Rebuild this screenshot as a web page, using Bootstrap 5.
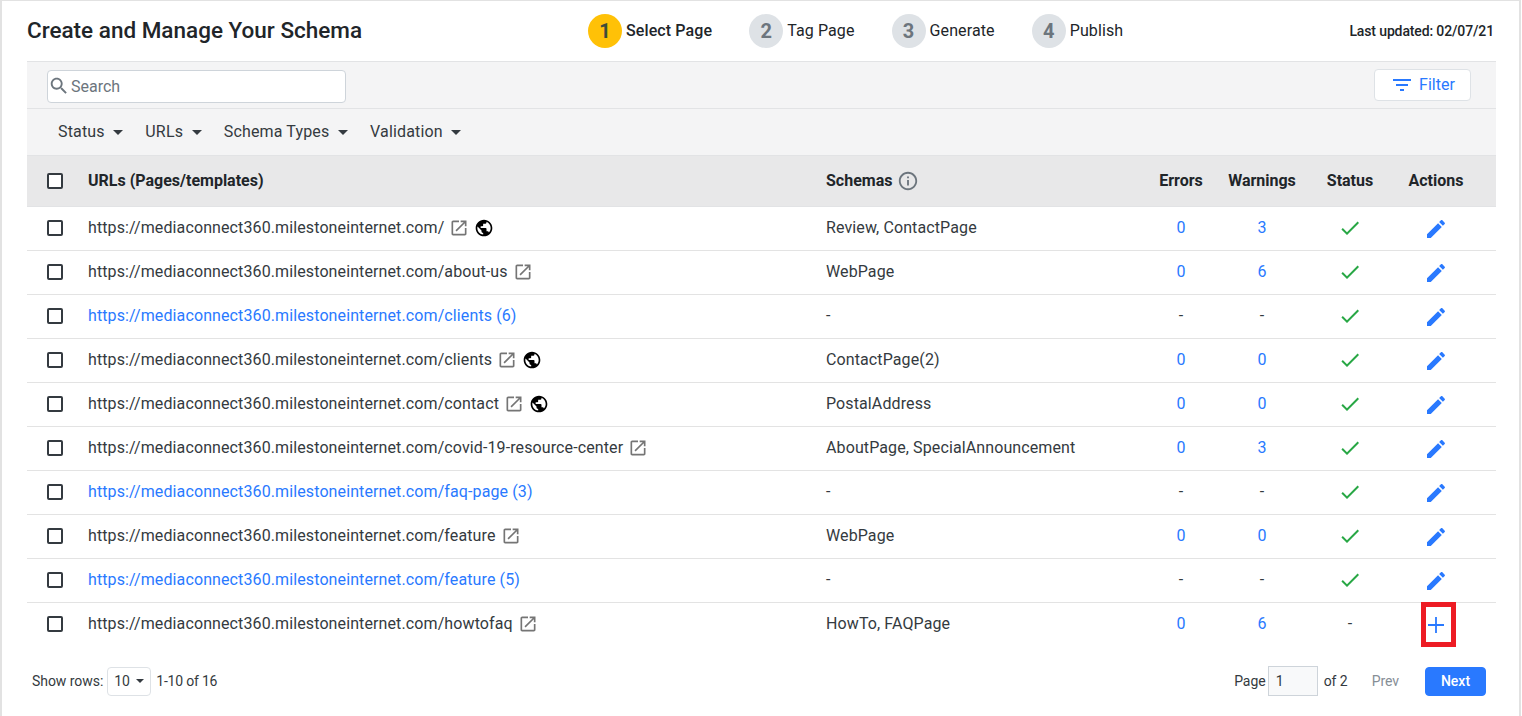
<!DOCTYPE html>
<html lang="en">
<head>
    <meta charset="UTF-8">
    <meta name="viewport" content="width=device-width, initial-scale=1.0">
    <title>Create and Manage Your Schema</title>
    <link href="https://cdn.jsdelivr.net/npm/bootstrap@5.3.0/dist/css/bootstrap.min.css" rel="stylesheet">
    <script src="https://cdn.jsdelivr.net/npm/bootstrap@5.3.0/dist/js/bootstrap.bundle.min.js"></script>
    <style>
        html, body { height: 716px; overflow: hidden; }
        body { font-family: Roboto, "Liberation Sans", sans-serif; font-size: 16px; letter-spacing: .11px; color: #212529; background: #fff; }
        .schema-shell { height: 716px; margin-right: 1px; padding: 0 23px 0 25px; border: solid #e2e2e2; border-width: 1px 2px 0 2px; }
        .page-top { height: 60px; }
        .page-title { flex: 0 0 561px; margin: 0 0 2px; font-size: 22.5px; font-weight: 500; line-height: 1.2; letter-spacing: 0; white-space: nowrap; }
        .steps { gap: 37px; }
        .step-dot { width: 34px; height: 34px; margin-right: 4px; border-radius: 50%; background: #dee2e6; color: #6c757d; font-size: 20px; font-weight: 700; }
        .step-on .step-dot { background: #ffc107; color: #3d4b3a; }
        .step-on { font-weight: 500; }
        .last-updated { flex: 1 1 0; padding-right: 2px; font-size: 14px; font-weight: 500; letter-spacing: -.13px; text-align: right; white-space: nowrap; }
        .tool-band { height: 47px; padding: 0 25px 0 20px; border-top: 1px solid #e2e3e5; background: #f4f4f5; }
        .search-box { width: 299px; height: 33px; margin-top: 2px; border: 1px solid #ced4da; border-radius: 4px; background: #fff; color: #6c757d; gap: 1px; }
        .search-box svg { flex: none; width: 22px; height: 22px; fill: #6c757d; }
        .search-box input { width: 240px; padding: 2px 0 0; border: 0; outline: 0; background: none; letter-spacing: 0; }
        .search-box input::placeholder { color: #6c757d; opacity: 1; }
        .filter-btn { width: 97px; height: 32px; padding: 0; border: 1px solid #dee2e6; background: #fff; color: #2979ff; border-radius: 4px; gap: 5px; letter-spacing: 0; }
        .filter-btn svg { width: 24px; height: 24px; fill: #2979ff; }
        .pick-row { padding-left: 31px; gap: 22px; }
        .pick-row .btn-pick { color: #343a40; padding: 0; border: 0; background: none; font-size: 16px; letter-spacing: .15px; }
        .caret-mark { display: inline-block; width: 0; height: 0; margin-left: 8.7px; vertical-align: 2px; border: 5px solid transparent; border-top-color: #343a40; border-bottom: 0; }
        .schema-table { table-layout: fixed; width: 1469px; margin: 0; color: #343a40; }
        .schema-table th, .schema-table td { height: 44px; padding: 0 12px 2px; vertical-align: middle; border-color: #e3e3e3; white-space: nowrap; font-weight: 400; color: #343a40; }
        .schema-table thead th { height: 51px; padding-bottom: 1px; background: #e8e8e9; font-weight: 700; color: #212529; letter-spacing: 0; border-top: 1px solid #e2e3e5; border-bottom: 1px solid #e2e3e5; }
        .schema-table tbody tr:last-child td { border-bottom: 0; }
        .col-check { width: 49px; }
        .col-url { width: 738px; }
        .col-errors { width: 68px; }
        .col-warn { width: 94px; }
        .col-status { width: 82px; }
        .col-actions { width: 105px; }
        .schema-table th.mid, .schema-table td.mid { text-align: center; padding-left: 0; padding-right: 0; }
        .schema-table td.act, .schema-table th.act { padding-left: 0; padding-right: 15px; text-align: center; }
        .schema-table tbody td.act { padding-bottom: 0; }
        .schema-table tbody td.add-cell { position: relative; padding-bottom: 2px; }
        .box-check { display: block; width: 16px; height: 16px; margin: 0 0 0 8px; border: 2px solid #343a40; border-radius: 2px; background: #fff; appearance: none; }
        .blue-link, .schema-table td.blue-link { color: #2979ff; text-decoration: none; }
        .ico { vertical-align: -5px; }
        .ico-open { fill: #757575; width: 20px; height: 20px; margin-left: 1px; }
        .ico-globe { fill: #000; margin-left: 5px; width: 20px; height: 20px; }
        .ico-info { fill: #6c757d; width: 22px; height: 22px; vertical-align: -6px; margin-left: 1px; }
        .ico-check { width: 24px; height: 24px; fill: #28a745; vertical-align: middle; }
        .ico-edit { width: 24px; height: 24px; fill: #2979ff; vertical-align: middle; }
        .ico-plus { width: 16px; height: 16px; stroke: #2979ff; stroke-width: 1.8; fill: none; vertical-align: middle; }
        .callout { position: absolute; left: 30px; top: -1px; width: 35px; height: 45px; border: 5px solid #ed1c24; }
        .pager-row { height: 69px; padding: 0 10px 0 5px; font-size: 14px; letter-spacing: -.05px; color: #343a40; }
        .rows-pick { width: 44px; height: 29px; margin: 0 5px 0 4px; padding-left: 6px; border: 1px solid #dee2e6; border-radius: 4px; font-size: 14px; }
        .rows-pick .caret-mark { margin-left: 6px; border-width: 4px; border-bottom: 0; }
        .row-count { letter-spacing: -.2px; }
        .page-input { width: 50px; height: 30px; margin: 0 6px 0 2px; padding: 0 7px; border: 1px solid #ced4da; background: #f8f9fa; color: #343a40; font-size: 14px; border-radius: 0; }
        .prev-link { margin: 0 26px 0 24px; color: #868e96; }
        .next-btn { width: 61px; height: 29px; padding: 0; background: #2979ff; border-color: #2979ff; font-size: 14px; font-weight: 500; border-radius: 4px; }
    </style>
</head>
<body>

    <svg width="0" height="0" class="position-absolute">
        <symbol id="i-open" viewBox="0 0 24 24"><path d="M19 19H5V5h7V3H5c-1.11 0-2 .9-2 2v14c0 1.1.89 2 2 2h14c1.1 0 2-.9 2-2v-7h-2v7zM14 3v2h3.59l-9.83 9.83 1.41 1.41L19 6.41V10h2V3h-7z"/></symbol>
        <symbol id="i-globe" viewBox="0 0 24 24"><path d="M12 2C6.48 2 2 6.48 2 12s4.48 10 10 10 10-4.48 10-10S17.52 2 12 2zm-1 17.93c-3.95-.49-7-3.85-7-7.93 0-.62.08-1.21.21-1.79L9 15v1c0 1.1.9 2 2 2v1.93zm6.9-2.54c-.26-.81-1-1.39-1.9-1.39h-1v-3c0-.55-.45-1-1-1H8v-2h2c.55 0 1-.45 1-1V7h2c1.1 0 2-.9 2-2v-.41c2.93 1.19 5 4.06 5 7.41 0 2.08-.8 3.97-2.1 5.39z"/></symbol>
        <symbol id="i-check" viewBox="0 0 24 24"><path d="M9 16.17L4.83 12l-1.42 1.41L9 19 21 7l-1.41-1.41z"/></symbol>
        <symbol id="i-edit" viewBox="0 0 24 24"><path d="M3 17.25V21h3.75L17.81 9.94l-3.75-3.75L3 17.25zM20.71 7.04c.39-.39.39-1.02 0-1.41l-2.34-2.34c-.39-.39-1.02-.39-1.41 0l-1.83 1.83 3.75 3.75 1.83-1.83z"/></symbol>
    </svg>

    <div class="schema-shell">
        <div class="page-top d-flex align-items-center">
            <h1 class="page-title">Create and Manage Your Schema</h1>
            <div class="steps d-flex align-items-center">
                <div class="step-on d-flex align-items-center"><span class="step-dot d-flex align-items-center justify-content-center">1</span>Select Page</div>
                <div class="d-flex align-items-center"><span class="step-dot d-flex align-items-center justify-content-center">2</span>Tag Page</div>
                <div class="d-flex align-items-center"><span class="step-dot d-flex align-items-center justify-content-center">3</span>Generate</div>
                <div class="d-flex align-items-center"><span class="step-dot d-flex align-items-center justify-content-center">4</span>Publish</div>
            </div>
            <div class="last-updated">Last updated: 02/07/21</div>
        </div>

        <div class="tool-band d-flex align-items-center justify-content-between">
            <label class="search-box d-flex align-items-center mb-0">
                <svg viewBox="0 0 24 24"><path d="M15.5 14h-.79l-.28-.27C15.41 12.59 16 11.11 16 9.5 16 5.91 13.09 3 9.5 3S3 5.91 3 9.5 5.91 16 9.5 16c1.61 0 3.09-.59 4.23-1.57l.27.28v.79l5 4.99L20.49 19l-4.99-5zm-6 0C7.01 14 5 11.99 5 9.5S7.01 5 9.5 5 14 7.01 14 9.5 11.99 14 9.5 14z"/></svg>
                <input type="text" placeholder="Search">
            </label>
            <button type="button" class="btn filter-btn d-flex align-items-center justify-content-center">
                <svg viewBox="0 0 24 24"><path d="M10 18h4v-2h-4v2zM3 6v2h18V6H3zm3 7h12v-2H6v2z"/></svg>Filter
            </button>
        </div>

        <div class="tool-band pick-row d-flex align-items-center justify-content-start">
            <button type="button" class="btn btn-pick">Status<span class="caret-mark"></span></button>
            <button type="button" class="btn btn-pick">URLs<span class="caret-mark"></span></button>
            <button type="button" class="btn btn-pick">Schema Types<span class="caret-mark"></span></button>
            <button type="button" class="btn btn-pick">Validation<span class="caret-mark"></span></button>
        </div>

        <table class="table schema-table">
            <colgroup>
                <col class="col-check"><col class="col-url"><col><col class="col-errors"><col class="col-warn"><col class="col-status"><col class="col-actions">
            </colgroup>
            <thead>
                <tr>
                    <th><input type="checkbox" class="box-check"></th>
                    <th>URLs (Pages/templates)</th>
                    <th>Schemas <svg class="ico-info" viewBox="0 0 24 24"><path d="M11 7h2v2h-2zm0 4h2v6h-2zm1-9C6.48 2 2 6.48 2 12s4.48 10 10 10 10-4.48 10-10S17.52 2 12 2zm0 18c-4.41 0-8-3.59-8-8s3.59-8 8-8 8 3.59 8 8-3.59 8-8 8z"/></svg></th>
                    <th class="mid">Errors</th>
                    <th class="mid">Warnings</th>
                    <th class="mid">Status</th>
                    <th class="act">Actions</th>
                </tr>
            </thead>
            <tbody>
                <tr>
                    <td><input type="checkbox" class="box-check"></td>
                    <td>https://mediaconnect360.milestoneinternet.com/ <svg class="ico ico-open"><use href="#i-open"/></svg><svg class="ico ico-globe"><use href="#i-globe"/></svg></td>
                    <td>Review, ContactPage</td>
                    <td class="mid blue-link">0</td><td class="mid blue-link">3</td>
                    <td class="mid"><svg class="ico-check"><use href="#i-check"/></svg></td>
                    <td class="act"><svg class="ico-edit"><use href="#i-edit"/></svg></td>
                </tr>
                <tr>
                    <td><input type="checkbox" class="box-check"></td>
                    <td>https://mediaconnect360.milestoneinternet.com/about-us <svg class="ico ico-open"><use href="#i-open"/></svg></td>
                    <td>WebPage</td>
                    <td class="mid blue-link">0</td><td class="mid blue-link">6</td>
                    <td class="mid"><svg class="ico-check"><use href="#i-check"/></svg></td>
                    <td class="act"><svg class="ico-edit"><use href="#i-edit"/></svg></td>
                </tr>
                <tr>
                    <td><input type="checkbox" class="box-check"></td>
                    <td><a href="#" class="blue-link">https://mediaconnect360.milestoneinternet.com/clients (6)</a></td>
                    <td>-</td>
                    <td class="mid">-</td><td class="mid">-</td>
                    <td class="mid"><svg class="ico-check"><use href="#i-check"/></svg></td>
                    <td class="act"><svg class="ico-edit"><use href="#i-edit"/></svg></td>
                </tr>
                <tr>
                    <td><input type="checkbox" class="box-check"></td>
                    <td>https://mediaconnect360.milestoneinternet.com/clients <svg class="ico ico-open"><use href="#i-open"/></svg><svg class="ico ico-globe"><use href="#i-globe"/></svg></td>
                    <td>ContactPage(2)</td>
                    <td class="mid blue-link">0</td><td class="mid blue-link">0</td>
                    <td class="mid"><svg class="ico-check"><use href="#i-check"/></svg></td>
                    <td class="act"><svg class="ico-edit"><use href="#i-edit"/></svg></td>
                </tr>
                <tr>
                    <td><input type="checkbox" class="box-check"></td>
                    <td>https://mediaconnect360.milestoneinternet.com/contact <svg class="ico ico-open"><use href="#i-open"/></svg><svg class="ico ico-globe"><use href="#i-globe"/></svg></td>
                    <td>PostalAddress</td>
                    <td class="mid blue-link">0</td><td class="mid blue-link">0</td>
                    <td class="mid"><svg class="ico-check"><use href="#i-check"/></svg></td>
                    <td class="act"><svg class="ico-edit"><use href="#i-edit"/></svg></td>
                </tr>
                <tr>
                    <td><input type="checkbox" class="box-check"></td>
                    <td>https://mediaconnect360.milestoneinternet.com/covid-19-resource-center <svg class="ico ico-open"><use href="#i-open"/></svg></td>
                    <td>AboutPage, SpecialAnnouncement</td>
                    <td class="mid blue-link">0</td><td class="mid blue-link">3</td>
                    <td class="mid"><svg class="ico-check"><use href="#i-check"/></svg></td>
                    <td class="act"><svg class="ico-edit"><use href="#i-edit"/></svg></td>
                </tr>
                <tr>
                    <td><input type="checkbox" class="box-check"></td>
                    <td><a href="#" class="blue-link">https://mediaconnect360.milestoneinternet.com/faq-page (3)</a></td>
                    <td>-</td>
                    <td class="mid">-</td><td class="mid">-</td>
                    <td class="mid"><svg class="ico-check"><use href="#i-check"/></svg></td>
                    <td class="act"><svg class="ico-edit"><use href="#i-edit"/></svg></td>
                </tr>
                <tr>
                    <td><input type="checkbox" class="box-check"></td>
                    <td>https://mediaconnect360.milestoneinternet.com/feature <svg class="ico ico-open"><use href="#i-open"/></svg></td>
                    <td>WebPage</td>
                    <td class="mid blue-link">0</td><td class="mid blue-link">0</td>
                    <td class="mid"><svg class="ico-check"><use href="#i-check"/></svg></td>
                    <td class="act"><svg class="ico-edit"><use href="#i-edit"/></svg></td>
                </tr>
                <tr>
                    <td><input type="checkbox" class="box-check"></td>
                    <td><a href="#" class="blue-link">https://mediaconnect360.milestoneinternet.com/feature (5)</a></td>
                    <td>-</td>
                    <td class="mid">-</td><td class="mid">-</td>
                    <td class="mid"><svg class="ico-check"><use href="#i-check"/></svg></td>
                    <td class="act"><svg class="ico-edit"><use href="#i-edit"/></svg></td>
                </tr>
                <tr>
                    <td><input type="checkbox" class="box-check"></td>
                    <td>https://mediaconnect360.milestoneinternet.com/howtofaq <svg class="ico ico-open"><use href="#i-open"/></svg></td>
                    <td>HowTo, FAQPage</td>
                    <td class="mid blue-link">0</td><td class="mid blue-link">6</td>
                    <td class="mid">-</td>
                    <td class="act add-cell">
                        <svg class="ico-plus" viewBox="0 0 16 16"><path d="M8 0v16M0 8h16"/></svg>
                        <span class="callout"></span>
                    </td>
                </tr>
            </tbody>
        </table>

        <div class="pager-row d-flex align-items-center justify-content-between">
            <div class="d-flex align-items-center">Show rows:
                <span class="rows-pick d-flex align-items-center">10<span class="caret-mark"></span></span><span class="row-count">1-10 of 16</span>
            </div>
            <div class="d-flex align-items-center">Page<input type="text" class="page-input" value="1">of 2
                <span class="prev-link">Prev</span>
                <button type="button" class="btn btn-primary next-btn">Next</button>
            </div>
        </div>
    </div>

</body>
</html>
